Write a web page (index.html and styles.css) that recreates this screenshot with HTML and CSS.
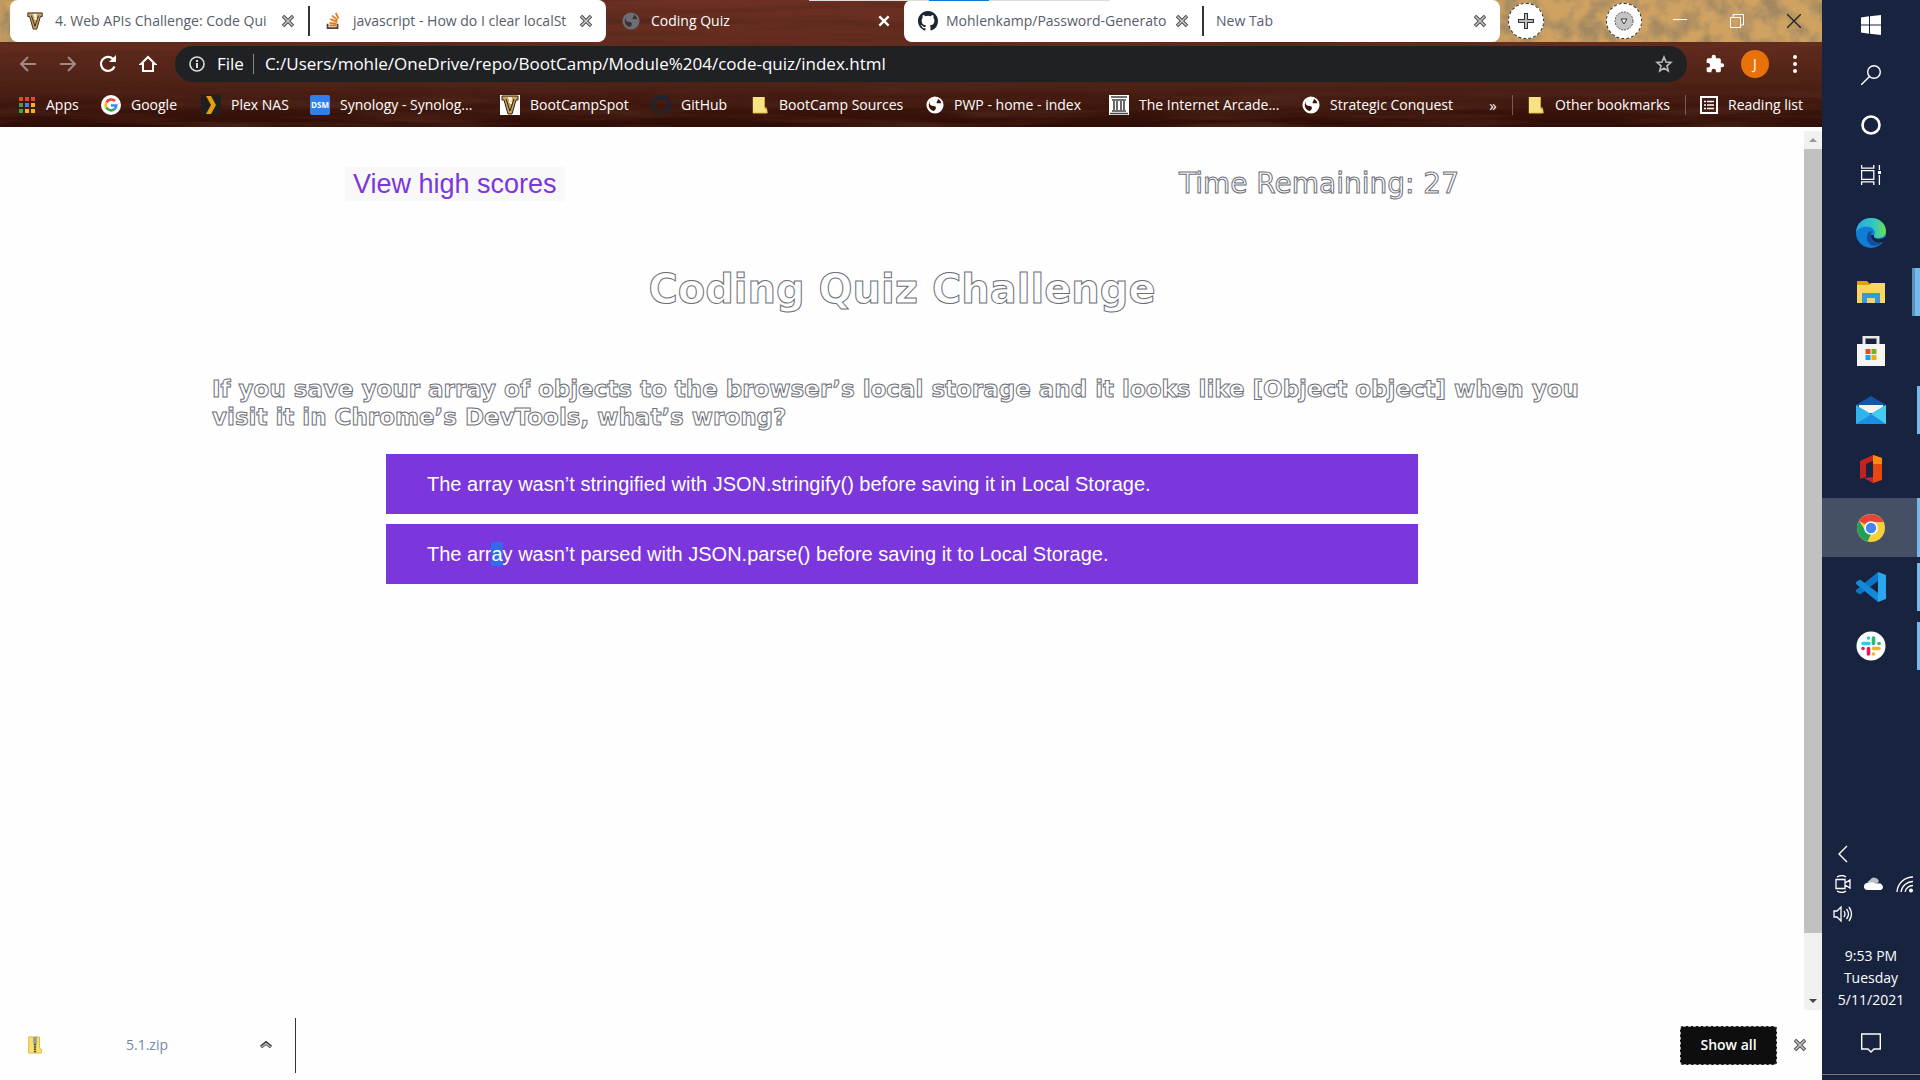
FILE: index.html
```html
<!DOCTYPE html>
<html lang="en">
<head>
<meta charset="utf-8">
<title>Coding Quiz</title>
<link rel="stylesheet" href="styles.css">
</head>
<body>
<svg class="defs" aria-hidden="true">
  <defs>
    <filter id="wood" x="0" y="0" width="100%" height="100%">
      <feTurbulence type="fractalNoise" baseFrequency="0.006 0.11" numOctaves="4" seed="8"/>
      <feColorMatrix values="0 0 0 0 0.08  0 0 0 0 0.02  0 0 0 0 0.01  2 0 0 0 -0.8"/>
    </filter>
    <filter id="parchment" x="0" y="0" width="100%" height="100%">
      <feTurbulence type="fractalNoise" baseFrequency="0.05" numOctaves="5" seed="3"/>
      <feColorMatrix values="0 0 0 0 0.36  0 0 0 0 0.25  0 0 0 0 0.12  2.600 0 0 0 -1"/>
    </filter>
    <symbol id="x" viewBox="0 0 12 12"><path d="M2 2l8 8M10 2l-8 8" fill="none" stroke="currentColor" stroke-width="2"/></symbol>
    <symbol id="xo" viewBox="0 0 14 14"><path d="M2 2l10 10M12 2L2 12" stroke="#444" stroke-width="3.400"/><path d="M2.500 2.500l9 9M11.500 2.500l-9 9" stroke="#ccc" stroke-width="1.500"/></symbol>
    <symbol id="trophy" viewBox="0 0 18 20"><path d="M1 1h16v4h-2l-4 14H7L3 5H1z" fill="#c9a25c" stroke="#2a2118"/><path d="M5 4l4 12 4-12" fill="none" stroke="#2a2118"/><path d="M7 3h3v2H8M8 7h2v2" fill="none" stroke="#fff" stroke-width="1.500"/></symbol>
    <symbol id="globe" viewBox="0 0 20 20"><circle cx="10" cy="10" r="9.500" fill="currentColor"/><path d="M8 3C4 5 3 8 5 10s6 0 6 3-2 2-2 4c-4-1-6-4-6-7 0-3 2-6 5-7zM13 3c1 2-2 3-1 5h5c0-2-2-4-4-5z" fill="var(--cut)"/></symbol>
    <symbol id="github" viewBox="0 0 16 16"><path fill="currentColor" d="M8 0C3.580 0 0 3.580 0 8c0 3.540 2.290 6.530 5.470 7.590.4.070.55-.17.55-.38 0-.19-.01-.82-.01-1.490-2.010.37-2.530-.49-2.690-.94-.09-.23-.48-.94-.82-1.130-.28-.15-.68-.52-.01-.53.63-.01 1.080.58 1.230.82.72 1.210 1.870.87 2.330.66.070-.52.28-.87.51-1.070-1.780-.2-3.640-.89-3.640-3.950 0-.87.31-1.590.82-2.150-.08-.2-.36-1.020.08-2.120 0 0 .67-.21 2.200.82a7.600 7.600 0 014 0c1.530-1.040 2.200-.82 2.200-.82.44 1.100.16 1.920.08 2.120.51.56.82 1.270.82 2.150 0 3.070-1.870 3.750-3.650 3.950.29.25.54.73.54 1.480 0 1.070-.01 1.930-.01 2.200 0 .21.15.46.55.38A8.010 8.010 0 0016 8c0-4.420-3.580-8-8-8z"/></symbol>
    <symbol id="folder" viewBox="0 0 18 20"><path d="M1 1h13v12l3 2v4H1z" fill="#f7e384"/><path d="M14 1v12h2l1 6H1" fill="none" stroke="#d9b43c"/></symbol>
  </defs>
</svg>
<div class="desktop">
  <div class="browser">
    <header class="chrome">
      <svg class="wood" aria-hidden="true"><rect width="100%" height="100%" filter="url(#wood)"/></svg>
      <div class="tabstrip">
        <svg class="parchment" aria-hidden="true"><rect width="100%" height="100%" filter="url(#parchment)"/></svg>
        <div class="tabs">
          <div class="tab first"><svg class="i18"><use href="#trophy"/></svg><span class="tab-title">4. Web APIs Challenge: Code Qui</span><button aria-label="Close tab"><svg class="i14"><use href="#xo"/></svg></button></div>
          <div class="tab split last"><svg class="i18" viewBox="0 0 18 20"><path d="M3 13v5h11v-5" fill="none" stroke="#444" stroke-width="2"/><path d="M5 15h8M5 12l8 1M6 8l8 3M8 4l6 5M12 1l3 6" stroke="#e07b1c" stroke-width="2"/></svg><span class="tab-title">javascript - How do I clear localSt</span><button aria-label="Close tab"><svg class="i14"><use href="#xo"/></svg></button></div>
          <div class="tab active"><svg class="i18 dim"><use href="#globe"/></svg><span class="tab-title">Coding Quiz</span><button aria-label="Close tab"><svg class="i14"><use href="#x"/></svg></button></div>
          <div class="tab first snug"><svg class="i20 ink"><use href="#github"/></svg><span class="tab-title">Mohlenkamp/Password-Generato</span><button aria-label="Close tab"><svg class="i14"><use href="#xo"/></svg></button></div>
          <div class="tab split last plain"><span class="tab-title">New Tab</span><button aria-label="Close tab"><svg class="i14"><use href="#xo"/></svg></button></div>
        </div>
        <button class="round" aria-label="New tab"><svg class="i18" viewBox="0 0 18 18"><path d="M9 1v16M1 9h16" stroke="#333" stroke-width="4"/><path d="M9 2v14M2 9h14" stroke="#bbb" stroke-width="2"/></svg></button>
        <button class="round search" aria-label="Search tabs"><svg class="i20" viewBox="0 0 20 20"><circle cx="10" cy="10" r="9" fill="#c4c4c4" stroke="#555" stroke-dasharray="2 1"/><path d="M7 8h6l-3 5z" fill="#fff" stroke="#333"/></svg></button>
        <div class="window-buttons">
          <button aria-label="Minimize"><svg class="i14" viewBox="0 0 14 14"><path d="M0 5.500h14" stroke="#fff"/></svg></button>
          <button aria-label="Restore"><svg class="i14" viewBox="0 0 14 14"><path d="M.5 3.500h10v10H.5zM3 3V.5h10.500V11H11" fill="none" stroke="#fff"/></svg></button>
          <button aria-label="Close"><svg class="i14" viewBox="0 0 14 14"><path d="M0 0l14 14M14 0L0 14" stroke="#222" stroke-width="1.300"/></svg></button>
        </div>
        <div class="top-strip"></div>
      </div>
      <div class="toolbar">
        <button class="faded" aria-label="Back"><svg class="i18" viewBox="0 0 18 18"><path d="M17 9H2M9 2L2 9l7 7" fill="none" stroke="currentColor" stroke-width="2"/></svg></button>
        <button class="faded" aria-label="Forward"><svg class="i18" viewBox="0 0 18 18"><path d="M1 9h15M9 2l7 7-7 7" fill="none" stroke="currentColor" stroke-width="2"/></svg></button>
        <button aria-label="Reload"><svg class="i18" viewBox="0 0 18 18"><path d="M15.500 11.500A7 7 0 1 1 14 4" fill="none" stroke="currentColor" stroke-width="2.200"/><path d="M17 0v7h-7z" fill="currentColor"/></svg></button>
        <button aria-label="Home"><svg class="i18" viewBox="0 0 18 18"><path d="M9 2l7 7h-2v7H4V9H2z" fill="none" stroke="currentColor" stroke-width="2"/></svg></button>
        <div class="address">
          <svg class="i16" viewBox="0 0 16 16"><circle cx="8" cy="8" r="7" fill="none" stroke="#ddd" stroke-width="1.600"/><path d="M8 7v5M8 4v2" stroke="#ddd" stroke-width="2"/></svg>
          <label for="url">File</label>
          <input id="url" type="text" value="C:/Users/mohle/OneDrive/repo/BootCamp/Module%204/code-quiz/index.html">
          <button aria-label="Bookmark"><svg class="i18" viewBox="0 0 18 18"><path d="M9 2l2 5 5 .4-4 3.500 1.300 5.100L9 13.200 4.700 16 6 10.900 2 7.400 7 7z" fill="none" stroke="#bbb" stroke-width="1.600"/></svg></button>
        </div>
        <button class="ext" aria-label="Extensions"><svg class="i20" viewBox="0 0 24 24"><path fill="#fff" d="M20.500 11H19V7a2 2 0 0 0-2-2h-4V3.500a2.500 2.500 0 0 0-5 0V5H4a2 2 0 0 0-2 2v3.800h1.500a2.700 2.700 0 0 1 0 5.400H2V20a2 2 0 0 0 2 2h3.800v-1.500a2.700 2.700 0 0 1 5.400 0V22H17a2 2 0 0 0 2-2v-4h1.500a2.500 2.500 0 0 0 0-5z"/></svg></button>
        <button class="avatar">J</button>
        <button class="menu" aria-label="Menu"><svg class="i20" viewBox="0 0 20 20"><g fill="#fff"><circle cx="10" cy="3" r="2"/><circle cx="10" cy="10" r="2"/><circle cx="10" cy="17" r="2"/></g></svg></button>
      </div>
      <nav class="bookmarks">
        <a href="#"><svg class="i18" viewBox="0 0 18 18"><path d="M1 1h4v4H1zM7 1h4v4H7zM13 1h4v4h-4z" fill="#e8452f"/><path d="M1 7h4v4H1z" fill="#3ba255"/><path d="M7 7h4v4H7z" fill="#3b82f0"/><path d="M13 7h4v4h-4zM7 13h4v4H7zM13 13h4v4h-4z" fill="#f2b21c"/><path d="M1 13h4v4H1z" fill="#3ba255"/></svg>Apps</a>
        <a href="#"><svg class="i20" viewBox="0 0 20 20"><circle cx="10" cy="10" r="10" fill="#fff"/><g fill="none" stroke-width="2.600"><path d="M5.500 7.300A5.400 5.400 0 0 1 14 6" stroke="#ea4335"/><path d="M5.400 12.700a5.400 5.400 0 0 1 0-5.400" stroke="#fbbc05"/><path d="M5.400 12.700A5.400 5.400 0 0 0 13.600 14" stroke="#34a853"/><path d="M13.600 14a5.400 5.400 0 0 0 1.700-3.500H10" stroke="#4285f4"/></g></svg>Google</a>
        <a href="#"><svg class="i20" viewBox="0 0 20 20"><path d="M0 0h20v20H0z" fill="#1f1f1f"/><path d="M5 1h5l5 9-5 9H5l5-9z" fill="#e5a00d"/></svg>Plex NAS</a>
        <a href="#"><span class="dsm">DSM</span>Synology - Synolog...</a>
        <a href="#"><svg class="i20 paper"><use href="#trophy"/></svg>BootCampSpot</a>
        <a href="#"><svg class="i20 ink"><use href="#github"/></svg>GitHub</a>
        <a href="#"><svg class="i18"><use href="#folder"/></svg>BootCamp Sources</a>
        <a href="#"><svg class="i18 light"><use href="#globe"/></svg>PWP - home - index</a>
        <a href="#"><svg class="i20 paper" viewBox="0 0 20 20"><path d="M2 2h16M3 5h14M3 16h14M1 18.500h18M5 6v9M8 6v9M12 6v9M15 6v9" stroke="#444" stroke-width="1.600"/></svg>The Internet Arcade...</a>
        <a href="#"><svg class="i18 light"><use href="#globe"/></svg>Strategic Conquest</a>
        <button class="more" aria-label="More bookmarks">»</button>
        <a href="#" class="ruled"><svg class="i18"><use href="#folder"/></svg>Other bookmarks</a>
        <a href="#" class="ruled"><svg class="i18" viewBox="0 0 18 18"><path d="M1 1h16v16H1z" fill="none" stroke="#fff" stroke-width="2"/><path d="M4 5.500h2M7 5.500h7M4 9h2M7 9h7M4 12.500h2M7 12.500h7" stroke="#fff" stroke-width="1.600"/></svg>Reading list</a>
      </nav>
    </header>

    <div class="viewport">
      <main class="page">
        <div class="quiz-head">
          <button class="scores">View high scores</button>
          <p class="timer ghost">Time Remaining: 27</p>
        </div>
        <h1 class="ghost">Coding Quiz Challenge</h1>
        <h2 class="ghost">If you save your array of objects to the browser’s local storage and it looks like [Object object] when you visit it in Chrome’s DevTools, what’s wrong?</h2>
        <div class="answers">
          <button>The array wasn’t stringified with JSON.stringify() before saving it in Local Storage.</button>
          <button>The arr<mark>a</mark>y wasn’t parsed with JSON.parse() before saving it to Local Storage.</button>
        </div>
      </main>
      <div class="scrollbar">
        <svg viewBox="0 0 18 18"><path d="M5 11h8L9 7z" fill="#999"/></svg>
        <div class="track"><div class="thumb"></div></div>
        <svg viewBox="0 0 18 18"><path d="M5 7h8l-4 4z" fill="#444"/></svg>
      </div>
    </div>

    <footer class="downloads">
      <div class="download">
        <svg class="i18" viewBox="0 0 18 20"><path d="M2 1h12v12l2 2v4H2z" fill="#f7e06c" stroke="#d9b43c"/><path d="M9 1v8" stroke="#999" stroke-width="4"/><path d="M9 9v10" stroke="#444" stroke-width="2.500" stroke-dasharray="1.500 1"/></svg>
        <span class="file">5.1.zip</span>
        <button aria-label="Download options"><svg class="i14" viewBox="0 0 14 14"><path d="M2 9l5-4 5 4" fill="none" stroke="#333" stroke-width="3.400"/><path d="M2.500 9L7 5.500 11.500 9" fill="none" stroke="#bbb" stroke-width="1.500"/></svg></button>
      </div>
      <button class="show-all">Show all</button>
      <button aria-label="Close downloads bar"><svg class="i14"><use href="#xo"/></svg></button>
    </footer>
  </div>

  <aside class="taskbar">
    <div class="system">
      <button aria-label="Start"><svg class="i20" viewBox="0 0 20 20"><path d="M0 2.500L8 1.300V9.500H0zM9 1.200L20 0v9.500H9zM0 10.500h8v8.200L0 17.600zM9 10.500h11V20L9 18.800z" fill="#fff"/></svg></button>
      <button aria-label="Search"><svg class="i20" viewBox="0 0 20 20"><g fill="none" stroke="#fff" stroke-width="1.400"><circle cx="13" cy="7" r="6.300"/><path d="M8.500 11.500L0 20"/></g></svg></button>
      <button aria-label="Cortana"><svg class="i20" viewBox="0 0 20 20"><circle cx="10" cy="10" r="8.500" fill="none" stroke="#fff" stroke-width="2.600"/></svg></button>
      <button aria-label="Task view"><svg class="i20" viewBox="0 0 20 20"><g fill="none" stroke="#fff" stroke-width="1.300"><path d="M.6 5.600h12.200v8.800H.6zM.6 0v3.200h12.200V0M.6 20v-3.200h12.200V20M18.400 0v5M18.400 10v10"/></g><path d="M17 6h3v3h-3z" fill="#fff"/></svg></button>
    </div>
    <div class="apps">
      <button aria-label="Edge"><svg class="i30" viewBox="0 0 30 30"><defs><linearGradient id="eg" x1="0" x2="1"><stop offset="0" stop-color="#28a8e0"/><stop offset=".6" stop-color="#35c6c0"/><stop offset="1" stop-color="#6be04f"/></linearGradient></defs><circle cx="15" cy="15" r="15" fill="#0f7fd6"/><path d="M0 14C1 5 7 0 15 0c9 0 15 6 15 13 0 5-4 7-8 7-3 0-5-1-4-3 2-3 0-7-5-8C8 8 3 9 0 14z" fill="url(#eg)"/><path d="M12 15c-3 6 0 12 6 13 4 0 8-3 10-6-6 3-13 1-13-5 0-2 1-3 1-3-1-1-3-1-4 1z" fill="#174e9c"/><path d="M18 17c-1 2 1 4 5 4 2 0 5-1 6-2l1 2-3 3c-6 2-12-1-12-7z" fill="#17233f"/></svg></button>
      <button class="open double" aria-label="File Explorer"><svg class="i30" viewBox="0 0 30 30"><path d="M1 4h10l3 3h15v19H1z" fill="#e3a008"/><path d="M1 8l12 0 2-2h14v20H1z" fill="#f8d663"/><path d="M6 26V16h18v10h-5v-5h-8v5z" fill="#3a96dd"/></svg></button>
      <button aria-label="Store"><svg class="i30" viewBox="0 0 30 30"><path d="M8 9V1h14v8" fill="none" stroke="#e8e8e8" stroke-width="3"/><path d="M1 8h28v22H1z" fill="#f5f5f5"/><path d="M9.500 13h5v5h-5z" fill="#e04e20"/><path d="M15.500 13h5v5h-5z" fill="#7cb518"/><path d="M9.500 19h5v5h-5z" fill="#1a9fe8"/><path d="M15.500 19h5v5h-5z" fill="#f0b400"/></svg></button>
      <button class="open" aria-label="Mail"><svg class="i30" viewBox="0 0 30 30"><path d="M0 10L15 1l15 9v6H0z" fill="#1356a8"/><path d="M3 10h24v8H3z" fill="#f3f3f3"/><path d="M0 10l15 9 15-9v19H0z" fill="#2fb4ee"/><path d="M0 29l30-19v19z" fill="#188fe0"/><path d="M30 10v19L15 19z" fill="#45cdf0"/></svg></button>
      <button aria-label="Office"><svg class="i30" viewBox="0 0 30 30"><path d="M4 7l13-6v6l-7 3v13l-6 2z" fill="#c22220"/><path d="M17 1l9 3v22l-9 3z" fill="#e8470d"/><path d="M17 1l9 3v6h-9z" fill="#f58b10"/><path d="M8 24l9-1v6z" fill="#c22240"/></svg></button>
      <button class="open current" aria-label="Chrome"><svg class="i30" viewBox="0 0 30 30"><circle cx="15" cy="15" r="14" fill="#f7ce3b"/><path d="M15 15L3 7.800A14 14 0 0 1 27.500 9H15z" fill="#e2453c"/><path d="M3 7.800L9.600 18l5.400 3-3.500 7.500A14 14 0 0 1 3 7.800z" fill="#23a058"/><circle cx="15" cy="15" r="6.800" fill="#fff"/><circle cx="15" cy="15" r="5.200" fill="#4285f4"/></svg></button>
      <button class="open" aria-label="Visual Studio Code"><svg class="i30" viewBox="0 0 30 30"><path d="M22 0v9L4 22.500 0 20v-2L22 0z" fill="#0b76c6"/><path d="M0 10l4-2.500L22 21v9L0 12z" fill="#1389d8"/><path d="M22 0l8 3v24l-8 3z" fill="#2aa7f0"/></svg></button>
      <button class="open" aria-label="Slack"><svg class="i30" viewBox="0 0 30 30"><circle cx="15" cy="15" r="14.500" fill="#fff"/><g fill="none" stroke-width="3.600" stroke-linecap="round"><path d="M7 12.500h6M12.500 7v.1" stroke="#36c5f0"/><path d="M17.500 7v5.500M23 12.500h.1" stroke="#2eb67d"/><path d="M17.500 17.500H23M17.500 23h.1" stroke="#ecb22e"/><path d="M12.500 17.500V23M7 17.500h.1" stroke="#e01e5a"/></g></svg></button>
    </div>
    <div class="tray">
      <button aria-label="Show hidden icons"><svg class="i18" viewBox="0 0 18 18"><path d="M13 1L5 9l8 8" fill="none" stroke="#fff" stroke-width="1.400"/></svg></button>
      <div class="tray-icons">
        <button aria-label="Meet now"><svg class="i18" viewBox="0 0 18 18"><g fill="none" stroke="#fff" stroke-width="1.300"><path d="M2 4.500h9v9H2zM11 8l5-3v8l-5-3M3 2q5-3 9 0M3 16q5 3 9 0"/></g></svg></button>
        <button aria-label="OneDrive"><svg class="i20" viewBox="0 0 20 14"><path d="M4 9a4 4 0 0 1 2-6 5 5 0 0 1 9 1l-4 6z" fill="#b8bdc7"/><path d="M3 13a3.500 3.500 0 0 1 1-7q5-2 8 1 5-2 6 1a3 3 0 0 1-1 5z" fill="#fff"/></svg></button>
        <button aria-label="Network"><svg class="i18" viewBox="0 0 18 18"><g fill="none" stroke="#fff" stroke-width="1.300"><path d="M1 17A16 16 0 0 1 17 2M5 17A12 12 0 0 1 17 6.500M9 17a8 8 0 0 1 8-6.500"/></g><circle cx="15" cy="15.500" r="2" fill="#fff"/></svg></button>
        <button aria-label="Volume"><svg class="i20" viewBox="0 0 20 18"><g fill="none" stroke="#fff" stroke-width="1.300"><path d="M1 6h3l4-4v14l-4-4H1zM11 6q2 3 0 6M13.500 4q4 5 0 10M16 2q5 7 0 14"/></g></svg></button>
      </div>
      <div class="clock"><span>9:53 PM</span><span>Tuesday</span><span>5/11/2021</span></div>
      <button class="notices" aria-label="Notifications"><svg class="i20" viewBox="0 0 20 20"><path d="M.7 1h18.600v15H13l-3 3-3-3H.7z" fill="none" stroke="#fff" stroke-width="1.400"/></svg></button>
      <div class="peek"></div>
    </div>
  </aside>
</div>
</body>
</html>
```
FILE: styles.css
```css
* { box-sizing: border-box; }
body { margin: 0; font: 15px/20px "Open Sans", "Noto Sans", sans-serif; background: #fefefe; }
button { border: 0; padding: 0; background: none; color: inherit; font: inherit; display: flex; align-items: center; justify-content: center; }
svg { flex: none; display: block; }
.defs { position: absolute; width: 0; height: 0; }
.i14 { width: 14px; height: 14px; }
.i16 { width: 16px; height: 16px; }
.i18 { width: 18px; height: 18px; }
.i20 { width: 20px; height: 20px; }
.i30 { width: 30px; height: 30px; }

.desktop { display: flex; min-height: 100vh; }
.browser { flex: 1; min-width: 0; display: flex; flex-direction: column; }

/* Browser frame */
.chrome { position: relative; background: linear-gradient(#6d3022, #642c1e 45px, #4d2015 85px, #2d0c05 127px); color: #fff; }
.wood, .parchment { position: absolute; inset: 0; width: 100%; height: 100%; }
.tabstrip { position: relative; height: 42px; display: flex; align-items: center; overflow: hidden; }
.parchment { background: #d0a262; clip-path: polygon(0 0, 600px 0, 600px 100%, 0 100%, 0 0, 910px 0, 100% 0, 100% 100%, 910px 100%, 910px 0); }
.tabs { position: relative; flex: 0 1 1490px; margin-left: 10px; display: grid; grid-template-columns: repeat(5, 1fr); height: 42px; }
.tab { display: flex; align-items: center; gap: 11px; padding: 0 13px 0 16px; background: #fff; color: #565d6b; min-width: 0; }
.tab.first { border-radius: 8px 0 0 8px; }
.tab.last { border-radius: 0 8px 8px 0; }
.tab.split::before { content: ""; width: 2px; height: 30px; background: #333; margin: 0 -11px 0 -16px; }
.tab.split svg:first-of-type { margin-left: 14px; }
.tab.split button svg:first-of-type { margin-left: 0; }
.tab.plain .tab-title { margin-left: 12px; }
.tab.active { background: none; color: #fff; }
.tab.snug { gap: 8px; padding-left: 14px; }
.tab-title { flex: 1; min-width: 0; white-space: nowrap; font-size: 14px; }
.dim { color: #6b7078; --cut: #43302c; }
.light { color: #fff; --cut: #3a150d; }
.ink { color: #1d2530; }
.paper { background: #fff; }
.round { position: relative; width: 36px; height: 36px; margin-left: 8px; border-radius: 50%; background: #fff; border: 1px dashed #333; }
.round.search { margin-left: 62px; }
.window-buttons { position: relative; margin-left: auto; display: flex; height: 36px; }
.window-buttons button { width: 57px; }
.top-strip { position: absolute; left: 809px; top: 0; width: 301px; height: 1px; background: linear-gradient(90deg, #ddd 120px, #0a78d4 120px, #0a78d4 180px, #ddd 180px); }

.toolbar { position: relative; display: flex; align-items: center; height: 44px; padding: 0 16px 0 8px; }
.toolbar > button { width: 40px; height: 36px; }
.toolbar > .faded { color: #a08a84; }
.address { flex: 1; display: flex; align-items: center; height: 36px; margin: 0 8px 0 7px; padding: 0 14px; border-radius: 18px; background: #202124; font-size: 17px; }
.address label { margin-left: 12px; padding-right: 9px; border-right: 1px solid #888; line-height: 20px; }
.address input { flex: 1; margin-left: 11px; padding: 0; border: 0; background: none; color: #fff; font: inherit; outline: 0; }
.toolbar > .avatar { width: 28px; height: 28px; margin: 0 6px; border-radius: 50%; background: #e8710a; font-size: 14px; }
.toolbar > .menu { width: 40px; margin-right: -9px; }

.bookmarks { position: relative; display: grid; grid-template-columns: 83px 100px 109px 190px 151px 100px 175px 183px 193px 172px 1fr 173px 122px; align-items: center; height: 41px; padding: 0 15px 4px 18px; }
.bookmarks a { display: flex; align-items: center; gap: 10px; color: #fff; text-decoration: none; white-space: nowrap; font-size: 14px; }
.bookmarks .ruled { border-left: 1px solid #7a5b50; padding-left: 14px; }
.dsm { width: 20px; background: #2f80ed; border-radius: 2px; font-size: 8px; font-weight: 700; text-align: center; }

/* Quiz page */
.viewport { flex: 1; display: flex; }
.page { flex: 1; min-width: 0; padding: 40px 0 24px; display: flex; flex-direction: column; align-items: center; font-family: "DejaVu Sans", sans-serif; }
.quiz-head { width: 100%; max-width: 1114px; display: flex; justify-content: space-between; align-items: center; }
.scores { height: 34px; padding: 0 8px; background: #f8f8f8; color: #7b36dc; font: 27px/34px "Liberation Sans", Arial, sans-serif; }
.ghost { color: #fefefe; -webkit-text-stroke: 1px #6c7078; margin: 0; }
.timer { font-size: 28px; line-height: 34px; }
h1 { font-size: 40px; line-height: 48px; }
h1.ghost { margin-top: 64px; }
h2 { font-size: 23px; line-height: 28px; width: 100%; max-width: 1380px; }
h2.ghost { margin-top: 62px; }
.answers { width: 100%; max-width: 1032px; margin-top: 23px; display: grid; gap: 10px; }
.answers button { justify-content: flex-start; min-height: 60px; padding: 0 41px; background: #7b36dc; color: #fff; font: 20px/24px "Liberation Sans", Arial, sans-serif; white-space: pre; }
mark { background: #2f6bea; color: inherit; }
.scrollbar { width: 18px; margin-top: 4px; display: flex; flex-direction: column; background: #f1f1f1; }
.scrollbar svg { height: 18px; width: 18px; }
.track { flex: 1; }
.thumb { height: 93%; background: #c1c1c1; }

.downloads { height: 70px; display: flex; align-items: center; padding-right: 15px; font-size: 14px; }
.download { width: 296px; height: 55px; display: flex; align-items: center; padding: 0 22px 0 26px; border-right: 1px solid #333; margin-right: auto; }
.file { color: #7488a5; margin: 0 auto 0 82px; }
.show-all { width: 97px; height: 39px; margin-right: 16px; border: 1px dashed #aaa; border-radius: 3px; background: #0e0e0e; color: #fff; font-weight: 600; }

/* Windows taskbar */
.taskbar { width: 98px; display: flex; flex-direction: column; background: #17233f; color: #fff; }
.taskbar button { width: 100%; }
.system button { height: 50px; }
.apps { margin-top: 3px; }
.apps button { position: relative; height: 59px; }
.open::after { content: ""; position: absolute; right: 0; width: 3px; height: 48px; background: #76b9ed; }
.apps .double::after { width: 5px; border-left: 3px solid #5b90bd; }
.apps .current { background: #454f66; }
.apps .current::after { height: 100%; }
.tray { margin-top: auto; }
.tray > button:first-child { width: 41px; height: 30px; }
.tray-icons { display: grid; grid-template-columns: repeat(3, 31px); grid-auto-rows: 30px; padding-left: 5px; }
.clock { display: flex; flex-direction: column; align-items: center; padding-top: 16px; font-size: 14px; line-height: 22px; }
.tray .notices { height: 63px; }
.peek { height: 6px; border-top: 1px solid #777; }
```
